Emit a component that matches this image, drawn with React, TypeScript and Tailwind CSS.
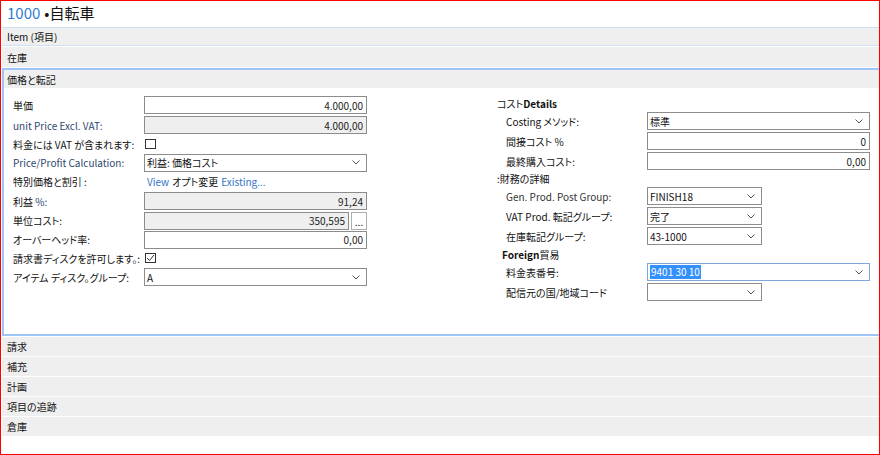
import React from 'react';

const font = "font-['Noto_Sans_CJK_JP','Liberation_Sans',sans-serif] [font-feature-settings:'palt']";

function Chevron() {
  return (
    <svg width="8" height="5" viewBox="0 0 8 5" className="shrink-0">
      <polyline points="0.5,0.5 4,4 7.5,0.5" fill="none" stroke="#555" strokeWidth="1" />
    </svg>
  );
}

function Field({ value, gray = false, wide = true }: { value: string; gray?: boolean; wide?: boolean }) {
  return (
    <div
      className={`h-[18px] border border-[#8c8c8c] flex items-center justify-end pr-[3px] text-[10px] text-[#222] ${
        gray ? 'bg-[#efefef]' : 'bg-white'
      } ${wide ? 'w-[223px]' : 'w-[115px]'}`}
    >
      {value}
    </div>
  );
}

function Select({ value, wide = true, picked = false }: { value: string; wide?: boolean; picked?: boolean }) {
  return (
    <div
      className={`h-[18px] border bg-white flex items-center justify-between pl-[2px] pr-[6px] text-[10px] text-[#111] ${
        picked ? 'border-[#7aa7dc]' : 'border-[#8c8c8c]'
      } ${wide ? 'w-[223px]' : 'w-[115px]'}`}
    >
      {picked ? <span className="bg-[#3390ff] text-white px-[1px] leading-[14px]">{value}</span> : <span>{value}</span>}
      <Chevron />
    </div>
  );
}

function Check({ on = false }: { on?: boolean }) {
  return (
    <div className="w-[11px] h-[10px] border border-[#333] bg-white flex items-center justify-center">
      {on && (
        <svg width="9" height="8" viewBox="0 0 9 8">
          <polyline points="1,4 3.5,6.5 8,1" fill="none" stroke="#333" strokeWidth="1" />
        </svg>
      )}
    </div>
  );
}

function Row({ label, h, children }: { label: React.ReactNode; h: string; children: React.ReactNode }) {
  return (
    <div className={`flex items-center ${h}`}>
      <div className="w-[131px] text-[10px] text-[#111] whitespace-nowrap">{label}</div>
      {children}
    </div>
  );
}

function RRow({ label, children }: { label: React.ReactNode; children: React.ReactNode }) {
  return (
    <div className="flex items-center h-[20px]">
      <div className="w-[150px] pl-[9px] text-[10px] text-[#111] whitespace-nowrap">{label}</div>
      {children}
    </div>
  );
}

function Band({ title }: { title: string }) {
  return (
    <div className="ml-[1px] h-[19px] mb-[1px] bg-[#efefef] flex items-center pl-[5px] text-[10px] text-[#111]">
      {title}
    </div>
  );
}

export default function App() {
  const blue = 'text-[#2c4770]';
  return (
    <div className={`w-[880px] h-[455px] bg-white border border-[#ff0000] flex flex-col ${font}`}>
      <div className="h-[26px] pl-[6px] pt-[2px] flex items-start text-[15px] leading-[20px]">
        <span className="text-[#2f7bd0]">1000</span>
        <span className="text-[#111] ml-[4px]">•自転車</span>
      </div>

      <div className="ml-[1px] h-[19px] border-t border-b border-[#d0e0f4] bg-[#efefef] flex items-center pl-[5px] text-[10px] text-[#111]">
        Item (項目)
      </div>
      <div className="ml-[1px] mt-[1px] h-[20px] bg-[#efefef] flex items-center pl-[5px] text-[10px] text-[#111]">
        在庫
      </div>

      <div className="ml-[1px] mt-[1px] border-l-2 border-t-2 border-b-2 border-[#9ec5f8]">
        <div className="h-[18px] bg-[#efefef] flex items-center pl-[3px] text-[10px] text-[#111]">価格と転記</div>
        <div className="h-[246px] bg-white flex pt-[7px] pl-[9px]">
          <div className="flex flex-col w-[354px]">
            <Row label="単価" h="h-[20px]">
              <Field value="4.000,00" />
            </Row>
            <Row label={<span className={blue}>unit Price Excl. VAT:</span>} h="h-[20px]">
              <Field value="4.000,00" gray />
            </Row>
            <Row label="料金には VAT が含まれます:" h="h-[18px]">
              <div className="pl-[1px]">
                <Check />
              </div>
            </Row>
            <Row label={<span className={blue}>Price/Profit Calculation:</span>} h="h-[19px]">
              <Select value="利益: 価格コスト" />
            </Row>
            <Row label="特別価格と割引 :" h="h-[19px]">
              <div className="pl-[3px] text-[10px] flex gap-[3px]">
                <span className="text-[#2f75c8]">View</span>
                <span className="text-[#111]">オプト変更</span>
                <span className="text-[#2f75c8]">Existing...</span>
              </div>
            </Row>
            <Row
              label={
                <span>
                  利益 <span className={blue}>%:</span>
                </span>
              }
              h="h-[20px]"
            >
              <Field value="91,24" gray />
            </Row>
            <Row label="単位コスト:" h="h-[19px]">
              <div className="flex gap-[2px]">
                <div className="h-[18px] w-[205px] border border-[#8c8c8c] bg-[#efefef] flex items-center justify-end pr-[3px] text-[10px] text-[#222]">
                  350,595
                </div>
                <div className="h-[18px] w-[16px] border border-[#adadad] bg-white flex items-end justify-center pb-[2px] text-[10px] leading-[10px] text-[#111]">
                  ...
                </div>
              </div>
            </Row>
            <Row label="オーバーヘッド率:" h="h-[19px]">
              <Field value="0,00" />
            </Row>
            <Row label="請求書ディスクを許可します。:" h="h-[18px]">
              <div className="pl-[1px]">
                <Check on />
              </div>
            </Row>
            <Row label="アイテム ディスク。グループ:" h="h-[20px]">
              <Select value="A" />
            </Row>
          </div>

          <div className="flex flex-col ml-[130px]">
            <div className="h-[16px] flex items-center text-[10px] text-[#111]">
              コスト<span className="font-bold">Details</span>
            </div>
            <RRow label="Costing メソッド:">
              <Select value="標準" />
            </RRow>
            <RRow label="間接コスト %">
              <Field value="0" />
            </RRow>
            <RRow label="最終購入コスト:">
              <Field value="0,00" />
            </RRow>
            <div className="h-[15px] flex items-center text-[10px] text-[#111]">:財務の詳細</div>
            <RRow label={<span className="text-[#333]">Gen. Prod. Post Group:</span>}>
              <Select value="FINISH18" wide={false} />
            </RRow>
            <RRow label="VAT Prod. 転記グループ:">
              <Select value="完了" wide={false} />
            </RRow>
            <RRow label="在庫転記グループ:">
              <Select value="43-1000" wide={false} />
            </RRow>
            <div className="h-[16px] flex items-center pl-[5px] text-[10px] text-[#111]">
              <span className="font-bold">Foreign</span>
              <span>貿易</span>
            </div>
            <RRow label="料金表番号:">
              <Select value="9401 30 10" picked />
            </RRow>
            <RRow label="配信元の国/地域コード">
              <Select value="" wide={false} />
            </RRow>
          </div>
        </div>
      </div>

      <div className="mt-[1px]">
        <Band title="請求" />
        <Band title="補充" />
        <Band title="計画" />
        <Band title="項目の追跡" />
        <Band title="倉庫" />
      </div>
    </div>
  );
}
